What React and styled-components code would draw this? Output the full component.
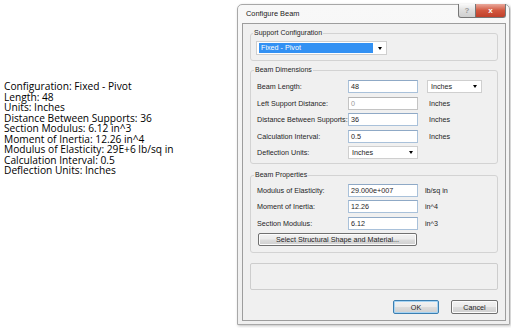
import React from 'react';
import styled, { createGlobalStyle } from 'styled-components';

const GlobalStyle = createGlobalStyle`
  html, body {
    margin: 0;
    padding: 0;
    background: #fff;
  }
  body {
    width: 511px;
    height: 328px;
    overflow: hidden;
  }
`;

const UI_FONT = `"Liberation Sans", Arial, sans-serif`;

const Page = styled.div`
  display: flex;
  align-items: flex-start;
  width: 511px;
  height: 328px;
  background: #fff;
`;

const Summary = styled.div`
  width: 237px;
  flex-shrink: 0;
  box-sizing: border-box;
  padding: 81px 0 0 4px;
  font-family: "Open Sans", "Noto Sans", sans-serif;
  font-size: 10.2px;
  line-height: 10.5px;
  color: #000;
`;

const Window = styled.div`
  margin-top: 4px;
  width: 273px;
  height: 321px;
  flex-shrink: 0;
  box-sizing: border-box;
  border: 1px solid #a8a8a8;
  border-radius: 5px 5px 0 0;
  background: linear-gradient(#f8f8f8, #efefef);
  padding: 0 3px 3px 4px;
  display: flex;
  flex-direction: column;
  box-shadow: 1px 1px 3px rgba(0, 0, 0, 0.25);
  font-family: ${UI_FONT};
`;

const TitleBar = styled.div`
  height: 18px;
  display: flex;
  align-items: flex-start;
`;

const Title = styled.div`
  flex: 1;
  padding-left: 4px;
  font-size: 7.4px;
  line-height: 18px;
  color: #1a1a1a;
`;

const CaptionButton = styled.div`
  margin-top: -1px;
  height: 14px;
  width: ${(p) => p.$w}px;
  box-sizing: border-box;
  border: 1px solid #767676;
  border-top: none;
  display: flex;
  align-items: center;
  justify-content: center;
  font-size: 8px;
  font-weight: bold;
  ${(p) =>
    p.$close
      ? `
    background: linear-gradient(#e9a99c, #d2573f 50%, #c0402a);
    color: #fff;
    border-left: none;
    border-radius: 0 0 3px 0;
  `
      : `
    background: linear-gradient(#fafafa, #dedede 50%, #cfcfcf);
    color: #9a9a9a;
    border-radius: 0 0 0 3px;
  `}
`;

const Client = styled.div`
  height: 298px;
  box-sizing: border-box;
  border: 1px solid #9d9d9d;
  background: #f0f0f0;
  padding: 5px 7px 0 7px;
  display: flex;
  flex-direction: column;
`;

const Group = styled.fieldset`
  margin: ${(p) => p.$top || 0}px 0 0 0;
  padding: ${(p) => p.$pad};
  border: 1px solid #d3d3d3;
  border-radius: 3px;
  min-width: 0;
`;

const Legend = styled.legend`
  margin-left: -3px;
  padding: 0 1px;
  font-size: 7px;
  line-height: 8px;
  color: #1e1e1e;
`;

const Form = styled.div`
  display: grid;
  grid-template-columns: 82px 70px auto;
  grid-auto-rows: 13px;
  column-gap: 9px;
  row-gap: 3.5px;
  align-items: center;
`;

const Label = styled.div`
  font-size: 7.2px;
  color: #1e1e1e;
  white-space: nowrap;
`;

const Field = styled.div`
  height: 13px;
  box-sizing: border-box;
  border: 1px solid ${(p) => (p.$disabled ? '#c4c4c4' : '#a9c1da')};
  border-top-color: ${(p) => (p.$disabled ? '#b4b4b4' : '#8fa9c6')};
  background: #fff;
  padding-left: 2px;
  font-size: 7.2px;
  line-height: 11px;
  color: ${(p) => (p.$disabled ? '#9a9a9a' : '#1e1e1e')};
`;

const Unit = styled.div`
  margin-left: ${(p) => p.$shift}px;
  font-size: 7.2px;
  color: #1e1e1e;
`;

const Combo = styled.div`
  width: ${(p) => p.$w}px;
  height: ${(p) => p.$h || 13}px;
  box-sizing: border-box;
  border: 1px solid #cfcfcf;
  background: #fff;
  display: flex;
  align-items: center;
  padding: 0 4px 0 ${(p) => p.$padLeft}px;
  font-size: 7.2px;
  color: #1e1e1e;
`;

const ComboText = styled.div`
  flex: 1;
  height: ${(p) => (p.$selected ? '10px' : 'auto')};
  line-height: 10px;
  padding-left: ${(p) => (p.$selected ? '2px' : '0')};
  margin-right: ${(p) => (p.$selected ? '5px' : '0')};
  background: ${(p) => (p.$selected ? '#3391f3' : 'transparent')};
  color: ${(p) => (p.$selected ? '#fff' : '#1e1e1e')};
`;

const Arrow = styled.div`
  width: 0;
  height: 0;
  border-left: 2.5px solid transparent;
  border-right: 2.5px solid transparent;
  border-top: 3px solid #000;
`;

const PushButton = styled.div`
  width: ${(p) => p.$w}px;
  height: ${(p) => p.$h || 14}px;
  box-sizing: border-box;
  margin-left: ${(p) => p.$left || 0}px;
  margin-top: ${(p) => p.$mt || 0}px;
  border: 1px solid ${(p) => (p.$default ? '#3c7fb1' : '#707070')};
  border-radius: 2px;
  background: linear-gradient(#f2f2f2, #ebebeb 48%, #dddddd 52%, #cfcfcf);
  box-shadow: ${(p) => (p.$default ? 'inset 0 0 0 1px #a6d4f4' : 'inset 0 0 0 1px #fcfcfc')};
  display: flex;
  align-items: center;
  justify-content: center;
  font-size: 7.2px;
  color: #1e1e1e;
`;

const EmptyBox = styled.div`
  margin-top: 10px;
  height: 25px;
  border: 1px solid #cdcdcd;
  border-radius: 2px;
`;

const Actions = styled.div`
  margin-top: 10px;
  display: flex;
  justify-content: flex-end;
  gap: 12px;
`;

const summary = [
  'Configuration: Fixed - Pivot',
  'Length: 48',
  'Units: Inches',
  'Distance Between Supports: 36',
  'Section Modulus: 6.12 in^3',
  'Moment of Inertia: 12.26 in^4',
  'Modulus of Elasticity: 29E+6 lb/sq in',
  'Calculation Interval: 0.5',
  'Deflection Units: Inches',
];

const App = () => (
  <Page>
    <GlobalStyle />
    <Summary>
      {summary.map((line) => (
        <div key={line}>{line}</div>
      ))}
    </Summary>

    <Window>
      <TitleBar>
        <Title>Configure Beam</Title>
        <CaptionButton $w={18}>?</CaptionButton>
        <CaptionButton $w={30} $close>x</CaptionButton>
      </TitleBar>

      <Client>
        <Group $pad="4px 5px 5px 5px">
          <Legend>Support Configuration</Legend>
          <Combo $w={131} $h={14} $padLeft={2}>
            <ComboText $selected>Fixed - Pivot</ComboText>
            <Arrow />
          </Combo>
        </Group>

        <Group $top={5} $pad="6px 6px 4px 6px">
          <Legend>Beam Dimensions</Legend>
          <Form>
            <Label>Beam Length:</Label>
            <Field>48</Field>
            <Combo $w={55} $padLeft={3}>
              <ComboText>Inches</ComboText>
              <Arrow />
            </Combo>

            <Label>Left Support Distance:</Label>
            <Field $disabled>0</Field>
            <Unit $shift={2}>Inches</Unit>

            <Label>Distance Between Supports:</Label>
            <Field>36</Field>
            <Unit $shift={2}>Inches</Unit>

            <Label>Calculation Interval:</Label>
            <Field>0.5</Field>
            <Unit $shift={2}>Inches</Unit>

            <Label>Deflection Units:</Label>
            <Combo $w={70} $padLeft={3}>
              <ComboText>Inches</ComboText>
              <Arrow />
            </Combo>
          </Form>
        </Group>

        <Group $top={7} $pad="4.5px 6px 6px 6px">
          <Legend>Beam Properties</Legend>
          <Form>
            <Label>Modulus of Elasticity:</Label>
            <Field>29.000e+007</Field>
            <Unit $shift={-2}>lb/sq in</Unit>

            <Label>Moment of Inertia:</Label>
            <Field>12.26</Field>
            <Unit $shift={-2}>in^4</Unit>

            <Label>Section Modulus:</Label>
            <Field>6.12</Field>
            <Unit $shift={-2}>in^3</Unit>
          </Form>
          <PushButton $w={159} $h={13} $left={1} $mt={3.5}>
            Select Structural Shape and Material...
          </PushButton>
        </Group>

        <EmptyBox />

        <Actions>
          <PushButton $w={46} $default>OK</PushButton>
          <PushButton $w={47}>Cancel</PushButton>
        </Actions>
      </Client>
    </Window>
  </Page>
);

export default App;
